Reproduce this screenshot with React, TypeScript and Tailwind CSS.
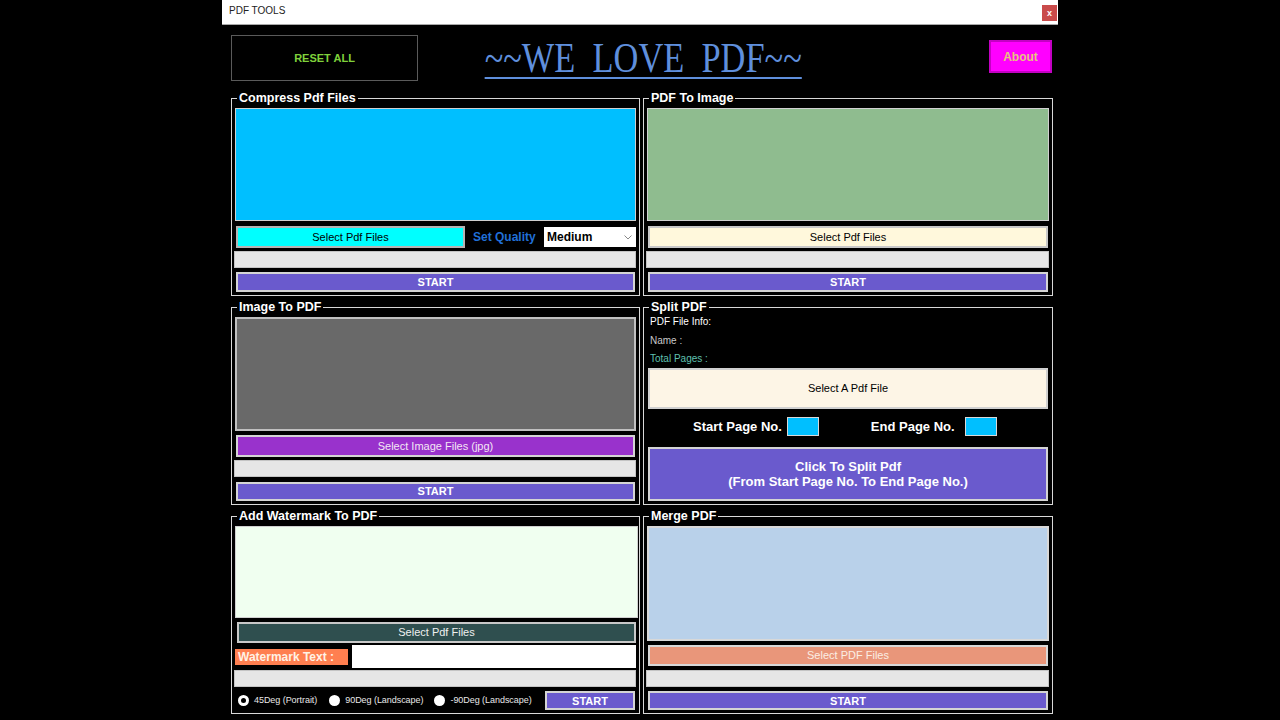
import React from "react";

const Panel = ({ title, children }: { title: string; children: React.ReactNode }) => (
  <fieldset className="h-[205px] border border-[#d8d8d8] px-[3px] pb-0">
    <legend className="ml-[2px] px-[2px] text-[12.5px] leading-[15px] font-bold text-white">{title}</legend>
    {children}
  </fieldset>
);

const Progress = () => <div className="h-[17px] -ml-[1px] border border-[#c4c4c4] bg-[#e6e6e6]" />;

const StartBtn = ({ h = "h-[20px]" }: { h?: string }) => (
  <button className={`${h} mx-[1px] flex w-[calc(100%-2px)] items-center justify-center border-2 border-[#d4d4d4] bg-[#6a5acd] text-[11px] font-bold text-white`}>
    START
  </button>
);

const Radio = ({ checked, label }: { checked?: boolean; label: string }) => (
  <div className="flex items-center">
    <span className="flex h-[11px] w-[11px] items-center justify-center rounded-full bg-white">
      {checked && <span className="h-[5px] w-[5px] rounded-full bg-black" />}
    </span>
    <span className="ml-[5px] text-[9px] tracking-[-0.05px] text-[#e8e8e8]">{label}</span>
  </div>
);

export default function App() {
  return (
    <div className="h-[720px] w-[1280px] overflow-hidden bg-black font-['Liberation_Sans',Arial,sans-serif]">
      <div className="ml-[222px] w-[836px]">
        {/* title bar */}
        <div className="flex h-[25px] items-start justify-between border-b border-[#a8a8a8] bg-white">
          <span className="ml-[7px] mt-[5px] text-[10px] leading-[12px] text-[#222]">PDF TOOLS</span>
          <span className="mr-[1px] mt-[5px] flex h-[16px] w-[15px] items-center justify-center bg-[#c94b4b] text-[9px] font-bold leading-none text-white">
            x
          </span>
        </div>

        {/* header */}
        <div className="flex h-[66px] items-start pl-[9px]">
          <button className="mt-[10px] flex h-[46px] w-[187px] items-center justify-center border border-[#5a5a5a] text-[11px] font-bold text-[#7fd13b]">
            RESET ALL
          </button>
          <div className="ml-[67px] mt-[9px] flex w-[316px] justify-center">
            <span className="inline-block scale-x-[0.8] whitespace-pre font-['Liberation_Serif',serif] text-[43px] leading-[48px] text-[#5f8fdc] underline decoration-2 underline-offset-[5px]">
              ~~WE  LOVE  PDF~~
            </span>
          </div>
          <button className="ml-[188px] mt-[15px] flex h-[33px] w-[63px] items-center justify-center border-2 border-[#c400c4] bg-[#ff00ff] text-[12px] font-bold text-[#e8c27e]">
            About
          </button>
        </div>

        {/* panels */}
        <div className="grid grid-cols-[409px_410px] gap-x-[3px] gap-y-[4px] pl-[9px]">
          {/* Compress */}
          <Panel title="Compress Pdf Files">
            <div className="mt-[2px] h-[113px] border border-[#d0d0d0] bg-[#00bfff]" />
            <div className="mt-[5px] flex h-[22px] items-center">
              <button className="ml-[1px] h-[22px] w-[229px] border-2 border-[#b4b4b4] bg-[#00ffff] text-[11px] text-black">
                Select Pdf Files
              </button>
              <span className="ml-[8px] text-[12px] font-bold text-[#2070d8]">Set Quality</span>
              <div className="ml-auto flex h-[20px] w-[92px] items-center justify-between bg-white pl-[3px] pr-[4px]">
                <span className="text-[12px] font-bold text-black">Medium</span>
                <svg width="8" height="5" viewBox="0 0 8 5">
                  <path d="M0.5 0.5 L4 4 L7.5 0.5" fill="none" stroke="#888" strokeWidth="1" />
                </svg>
              </div>
            </div>
            <div className="mt-[3px]"><Progress /></div>
            <div className="mt-[4px]"><StartBtn /></div>
          </Panel>

          {/* PDF to Image */}
          <Panel title="PDF To Image">
            <div className="mt-[2px] h-[113px] border border-[#d0d0d0] bg-[#8fbc8f]" />
            <button className="mx-[1px] mt-[5px] h-[22px] w-[calc(100%-2px)] border-2 border-[#c8c8c8] bg-[#fff8dc] text-[11px] text-black">
              Select Pdf Files
            </button>
            <div className="mt-[3px]"><Progress /></div>
            <div className="mt-[4px]"><StartBtn /></div>
          </Panel>

          {/* Image to PDF */}
          <Panel title="Image To PDF">
            <div className="mt-[2px] h-[114px] border-2 border-[#c0c0c0] bg-[#696969]" />
            <button className="mx-[1px] mt-[4px] h-[22px] w-[calc(100%-2px)] border-2 border-[#d4d4d4] bg-[#9932cc] text-[11px] text-[#f4e6f4]">
              Select Image Files (jpg)
            </button>
            <div className="mt-[3px]"><Progress /></div>
            <div className="mt-[5px]"><StartBtn h="h-[19px]" /></div>
          </Panel>

          {/* Split PDF */}
          <Panel title="Split PDF">
            <div className="pl-[3px] text-[10px] leading-[14px] text-white">PDF File Info:</div>
            <div className="mt-[5px] pl-[3px] text-[10px] leading-[14px] text-[#c8c8c8]">Name :</div>
            <div className="mt-[4px] pl-[3px] text-[10px] leading-[14px] text-[#5fc0b0]">Total Pages :</div>
            <button className="mx-[1px] mt-[2px] h-[41px] w-[calc(100%-2px)] border-2 border-[#d0d0d0] bg-[#fdf5e6] text-[11px] text-black">
              Select A Pdf File
            </button>
            <div className="mt-[8px] flex h-[19px] items-center pl-[46px]">
              <span className="text-[13px] font-bold text-white">Start Page No.</span>
              <span className="ml-[5px] h-[19px] w-[32px] border border-[#d8d8d8] bg-[#00bfff]" />
              <span className="ml-[52px] text-[13px] font-bold text-white">End Page No.</span>
              <span className="ml-[10px] h-[19px] w-[32px] border border-[#d8d8d8] bg-[#00bfff]" />
            </div>
            <button className="mx-[1px] mt-[11px] flex h-[54px] w-[calc(100%-2px)] flex-col items-center justify-center border-2 border-[#d4d4d4] bg-[#6a5acd] text-[13px] leading-[15px] font-bold text-white">
              <span>Click To Split Pdf</span>
              <span>(From Start Page No. To End Page No.)</span>
            </button>
          </Panel>

          {/* Watermark */}
          <Panel title="Add Watermark To PDF">
            <div className="-mr-[2px] mt-[2px] h-[92px] border border-[#d0d0d0] bg-[#f0fff0]" />
            <button className="ml-[2px] mt-[4px] h-[21px] w-[399px] border-2 border-[#c8c8c8] bg-[#2f4f4f] text-[11px] text-[#f0f0f0]">
              Select Pdf Files
            </button>
            <div className="mt-[2px] flex h-[23px] items-center">
              <span className="flex h-[16px] w-[113px] items-center bg-[#ff7f50] pl-[3px] text-[12px] font-bold text-[#fff2e6]">
                Watermark Text :
              </span>
              <span className="ml-[4px] h-[23px] w-[284px] bg-white" />
            </div>
            <div className="mt-[2px]"><Progress /></div>
            <div className="mt-[4px] flex h-[19px] items-center pl-[3px]">
              <Radio checked label="45Deg (Portrait)" />
              <div className="ml-[12px]"><Radio label="90Deg (Landscape)" /></div>
              <div className="ml-[11px]"><Radio label="-90Deg (Landscape)" /></div>
              <button className="ml-auto mr-[1px] flex h-[19px] w-[90px] items-center justify-center border-2 border-[#d4d4d4] bg-[#6a5acd] text-[11px] font-bold text-white">
                START
              </button>
            </div>
          </Panel>

          {/* Merge */}
          <Panel title="Merge PDF">
            <div className="mt-[2px] h-[115px] border-2 border-[#d8d8d8] bg-[#b9d1ea]" />
            <button className="mx-[1px] mt-[4px] h-[21px] w-[calc(100%-2px)] border-2 border-[#d8d8d8] bg-[#e9967a] text-[11px] text-[#fbeee4]">
              Select PDF Files
            </button>
            <div className="mt-[4px]"><Progress /></div>
            <div className="mt-[4px]"><StartBtn h="h-[19px]" /></div>
          </Panel>
        </div>
      </div>
    </div>
  );
}
